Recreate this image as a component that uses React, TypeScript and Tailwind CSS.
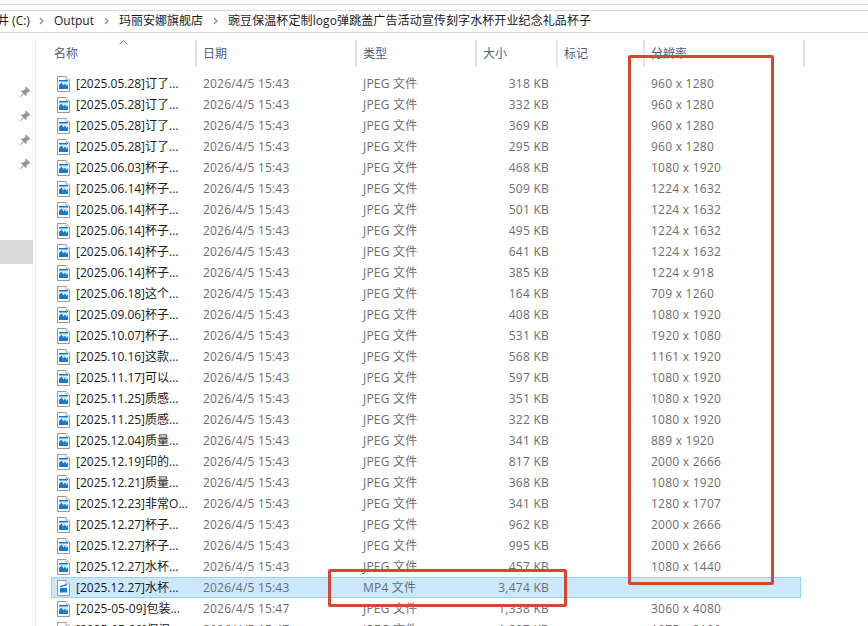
const rows: [string, string, string, string, string][] = [
  ["[2025.05.28]订了...", "2026/4/5 15:43", "JPEG 文件", "318 KB", "960 x 1280"],
  ["[2025.05.28]订了...", "2026/4/5 15:43", "JPEG 文件", "332 KB", "960 x 1280"],
  ["[2025.05.28]订了...", "2026/4/5 15:43", "JPEG 文件", "369 KB", "960 x 1280"],
  ["[2025.05.28]订了...", "2026/4/5 15:43", "JPEG 文件", "295 KB", "960 x 1280"],
  ["[2025.06.03]杯子...", "2026/4/5 15:43", "JPEG 文件", "468 KB", "1080 x 1920"],
  ["[2025.06.14]杯子...", "2026/4/5 15:43", "JPEG 文件", "509 KB", "1224 x 1632"],
  ["[2025.06.14]杯子...", "2026/4/5 15:43", "JPEG 文件", "501 KB", "1224 x 1632"],
  ["[2025.06.14]杯子...", "2026/4/5 15:43", "JPEG 文件", "495 KB", "1224 x 1632"],
  ["[2025.06.14]杯子...", "2026/4/5 15:43", "JPEG 文件", "641 KB", "1224 x 1632"],
  ["[2025.06.14]杯子...", "2026/4/5 15:43", "JPEG 文件", "385 KB", "1224 x 918"],
  ["[2025.06.18]这个...", "2026/4/5 15:43", "JPEG 文件", "164 KB", "709 x 1260"],
  ["[2025.09.06]杯子...", "2026/4/5 15:43", "JPEG 文件", "408 KB", "1080 x 1920"],
  ["[2025.10.07]杯子...", "2026/4/5 15:43", "JPEG 文件", "531 KB", "1920 x 1080"],
  ["[2025.10.16]这款...", "2026/4/5 15:43", "JPEG 文件", "568 KB", "1161 x 1920"],
  ["[2025.11.17]可以...", "2026/4/5 15:43", "JPEG 文件", "597 KB", "1080 x 1920"],
  ["[2025.11.25]质感...", "2026/4/5 15:43", "JPEG 文件", "351 KB", "1080 x 1920"],
  ["[2025.11.25]质感...", "2026/4/5 15:43", "JPEG 文件", "322 KB", "1080 x 1920"],
  ["[2025.12.04]质量...", "2026/4/5 15:43", "JPEG 文件", "341 KB", "889 x 1920"],
  ["[2025.12.19]印的...", "2026/4/5 15:43", "JPEG 文件", "817 KB", "2000 x 2666"],
  ["[2025.12.21]质量...", "2026/4/5 15:43", "JPEG 文件", "368 KB", "1080 x 1920"],
  ["[2025.12.23]非常O...", "2026/4/5 15:43", "JPEG 文件", "341 KB", "1280 x 1707"],
  ["[2025.12.27]杯子...", "2026/4/5 15:43", "JPEG 文件", "962 KB", "2000 x 2666"],
  ["[2025.12.27]杯子...", "2026/4/5 15:43", "JPEG 文件", "995 KB", "2000 x 2666"],
  ["[2025.12.27]水杯...", "2026/4/5 15:43", "JPEG 文件", "457 KB", "1080 x 1440"],
  ["[2025.12.27]水杯...", "2026/4/5 15:43", "MP4 文件", "3,474 KB", ""],
  ["[2025-05-09]包装...", "2026/4/5 15:47", "JPEG 文件", "1,338 KB", "3060 x 4080"],
  ["[2025-05-09]保温...", "2026/4/5 15:47", "JPEG 文件", "1,807 KB", "1075 x 2100"],
];

const headers = [
  { label: "名称", width: "w-[147px]", pad: "pl-[4px]" },
  { label: "日期", width: "w-[160px]", pad: "pl-[6px]" },
  { label: "类型", width: "w-[120px]", pad: "pl-[6px]" },
  { label: "大小", width: "w-[81px]", pad: "pl-[6px]" },
  { label: "标记", width: "w-[87px]", pad: "pl-[6px]" },
  { label: "分辨率", width: "w-[160px]", pad: "pl-[6px]" },
];

function ImageFileIcon() {
  return (
    <svg width="13" height="16" viewBox="0 0 13 16" className="shrink-0">
      <path d="M0.5 0.5H9L12.5 4V15.5H0.5Z" fill="#fff" stroke="#9a9a9a" />
      <path d="M9 0.5V4H12.5" fill="#eee" stroke="#b5b5b5" />
      <rect x="2" y="4" width="9" height="9" fill="#0f7bd8" />
      <path d="M2 5.5H11V8L9.5 10L8 7.5L6.5 9.5L4.5 6.5L2 9Z" fill="#d9efff" />
    </svg>
  );
}

function VideoFileIcon() {
  return (
    <svg width="13" height="16" viewBox="0 0 13 16" className="shrink-0">
      <path d="M0.5 0.5H9L12.5 4V15.5H0.5Z" fill="#fff" stroke="#9a9a9a" />
      <path d="M9 0.5V4H12.5" fill="#eee" stroke="#b5b5b5" />
      <path d="M3 8H10V12.5H3Z" fill="#0f7bd8" />
      <path d="M3 5.8L9.6 4L10 5.3L3.4 7.2Z" fill="#0f7bd8" />
    </svg>
  );
}

function Pin() {
  return (
    <svg width="12" height="12" viewBox="0 0 12 12">
      <path d="M7 0.5L11.5 5L10.4 5.8L9.6 5.5L7.6 7.5L7.6 9.6L6.6 10L2.2 5.5L2.6 4.6L4.6 4.5L6.6 2.4L6.3 1.4Z" fill="#8e959b" />
      <path d="M3.8 7.6L4.6 8.4L1 11.6L0.5 11.2Z" fill="#8e959b" />
    </svg>
  );
}

function Crumb() {
  return (
    <svg width="5" height="8" viewBox="0 0 5 8" className="shrink-0">
      <path d="M1 1L4 4L1 7" fill="none" stroke="#8a8a8a" strokeWidth="1.2" />
    </svg>
  );
}

export default function App() {
  return (
    <div className="relative h-[626px] w-[868px] overflow-hidden bg-white font-['Open_Sans','Noto_Sans_CJK_SC',sans-serif] text-xs">
      <div className="mt-1 h-[1px] bg-[#d9d9d9]" />
      {/* address bar */}
      <div className="mt-[5px] flex h-[23px] items-center border-y border-[#d9d9d9] pb-[1px] text-[12px] text-[#1a1a1a]">
        <span className="-ml-[3px] w-[42px] shrink-0 whitespace-nowrap">井 (C:)</span>
        <span className="mr-[10px]"><Crumb /></span>
        <span>Output</span>
        <span className="mx-[10px]"><Crumb /></span>
        <span>玛丽安娜旗舰店</span>
        <span className="mx-[10px]"><Crumb /></span>
        <span className="whitespace-nowrap tracking-[0.1px]">豌豆保温杯定制logo弹跳盖广告活动宣传刻字水杯开业纪念礼品杯子</span>
      </div>

      <div className="flex">
        {/* quick access pins */}
        <aside className="mt-[7px] h-[586px] w-[36px] shrink-0 border-r border-[#ececec]">
          <div className="mt-[46px] flex flex-col items-center gap-3 pl-[14px]">
            <Pin />
            <Pin />
            <Pin />
            <Pin />
          </div>
          <div className="mt-[70px] h-6 w-[33px] bg-[#d9d9d9]" />
        </aside>

        <div className="ml-[14px] min-w-0 flex-1">
          <div className="relative mt-[7px] flex h-[27px] text-[#4c607a]">
            <svg width="9" height="5" viewBox="0 0 9 5" className="absolute top-0 left-[69px]">
              <path d="M0.5 4.5L4.5 0.7L8.5 4.5" fill="none" stroke="#7a7a7a" />
            </svg>
            {headers.map((h) => (
              <div key={h.label} className={`${h.width} ${h.pad} flex shrink-0 items-center border-r-2 border-[#e5e5e5] text-[12px]`}>
                {h.label}
              </div>
            ))}
          </div>

          <div className="mt-[6px] pl-[1px]">
            {rows.map((r, i) => {
              const selected = r[2].startsWith("MP4");
              return (
                <div
                  key={i}
                  className={`flex h-[21px] w-[750px] items-center border text-[#6d6d6d] ${selected ? "border-[#99d1ff] bg-[#cce8ff]" : "border-transparent"}`}
                >
                  <div className="flex w-[144px] shrink-0 items-center gap-[6px] pl-[5px] text-[#1a1a1a]">
                    {selected ? <VideoFileIcon /> : <ImageFileIcon />}
                    <span className="whitespace-nowrap">{r[0]}</span>
                  </div>
                  <div className="w-[160px] shrink-0 pl-[7px] tracking-[0.2px]">{r[1]}</div>
                  <div className="w-[120px] shrink-0 pl-[7px] tracking-[0.2px]">{r[2]}</div>
                  <div className="w-[73px] shrink-0 text-right tracking-[0.25px]">{r[3]}</div>
                  <div className="ml-[102px] whitespace-nowrap tracking-[0.25px]">{r[4]}</div>
                </div>
              );
            })}
          </div>
        </div>
      </div>

      {/* red annotation boxes drawn over the list */}
      <div className="absolute left-[628px] top-[55px] h-[530px] w-[146px] rounded-[2px] border-[3px] border-[#d2492f]" />
      <div className="absolute left-[328px] top-[569px] h-[38px] w-[239px] rounded-[2px] border-[3px] border-[#d2492f]" />
    </div>
  );
}
